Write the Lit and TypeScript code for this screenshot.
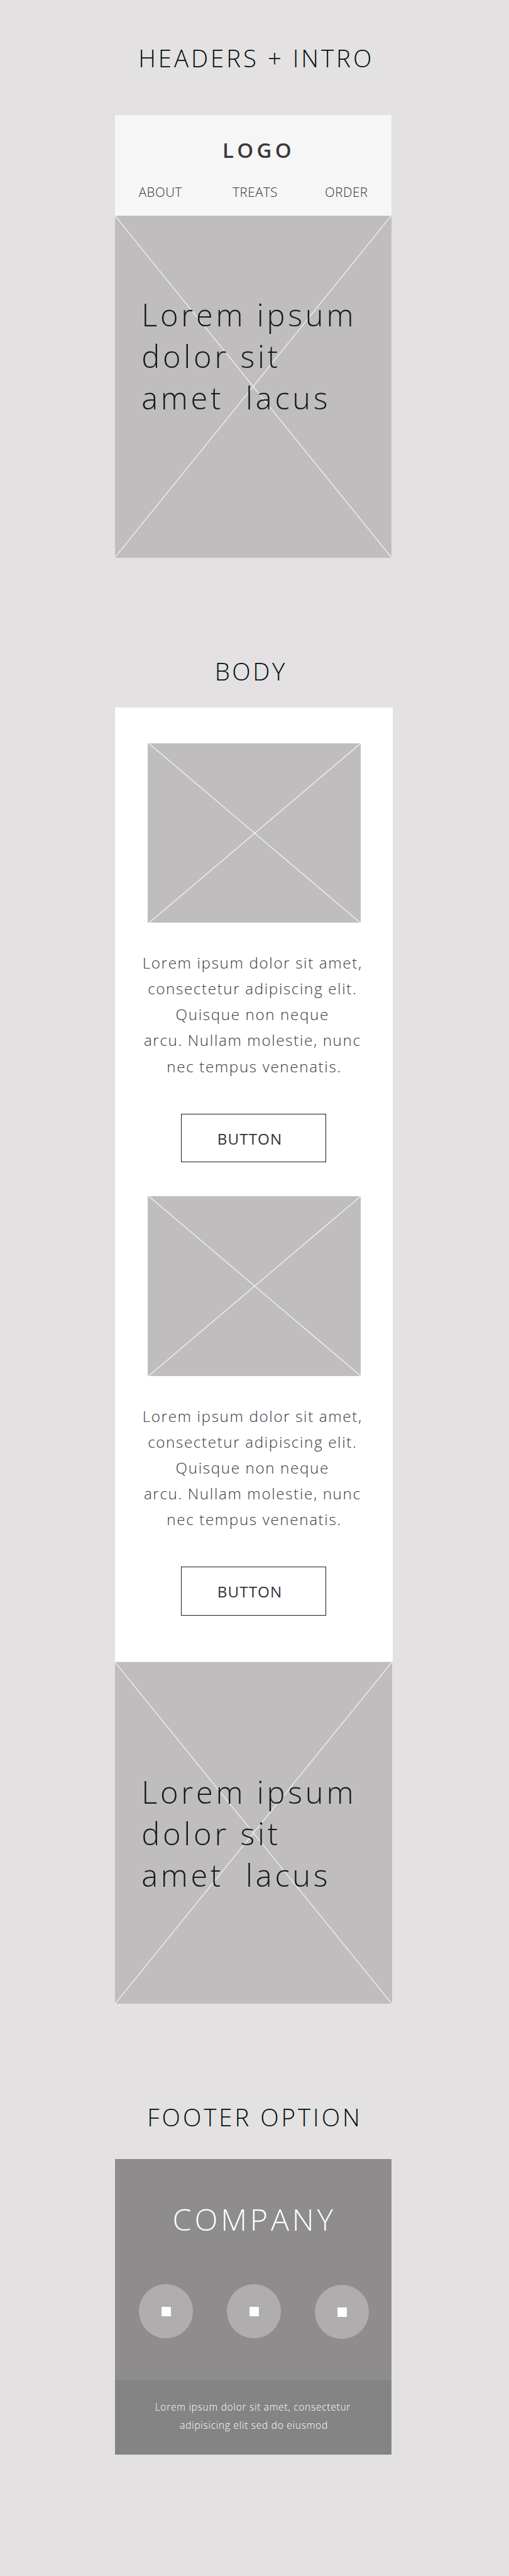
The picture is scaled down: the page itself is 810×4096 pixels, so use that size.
import { LitElement, html, css } from "lit";
import { customElement, property } from "lit/decorators.js";

/* Placeholder picture: a grey box crossed by two diagonals. */
@customElement("image-placeholder")
class ImagePlaceholder extends LitElement {
  @property({ type: Number }) inset = 0;

  static styles = css`
    :host { display: block; background: #bfbdbe; }
    svg { display: block; width: 100%; height: 100%; }
    line { stroke: #f5f4f4; stroke-width: 1.25px; vector-effect: non-scaling-stroke; }
  `;

  render() {
    return html`
      <svg viewBox="0 0 100 100" preserveAspectRatio="none" aria-hidden="true">
        <line x1=${this.inset} y1="0" x2="100" y2="100"></line>
        <line x1="100" y1="0" x2=${this.inset} y2="100"></line>
      </svg>
    `;
  }
}

@customElement("hero-banner")
class HeroBanner extends LitElement {
  static styles = css`
    :host { display: grid; height: calc(593 * var(--u)); }
    image-placeholder, .title { grid-area: 1 / 1; }
    .title {
      margin: 0;
      padding: calc(var(--title-top) * var(--u)) 0 0 calc(45.8 * var(--u));
      font-size: calc(53.3 * var(--u));
      font-weight: 300;
      line-height: calc(72 * var(--u));
      letter-spacing: calc(5.17 * var(--u));
      color: #1a1a1a;
    }
    .line { display: block; white-space: pre; }
  `;

  render() {
    return html`
      <image-placeholder></image-placeholder>
      <h2 class="title">
        ${["Lorem ipsum", "dolor sit", "amet  lacus"].map((t) => html`<span class="line">${t}</span>`)}
      </h2>
    `;
  }
}

@customElement("content-block")
class ContentBlock extends LitElement {
  static styles = css`
    :host { display: block; }
    .picture { width: calc(370 * var(--u)); height: calc(312 * var(--u)); margin-left: calc(56.3 * var(--u)); }
    .copy {
      width: calc(477.2 * var(--u));
      margin: calc(46.2 * var(--u)) 0 calc(59.8 * var(--u));
      font-size: calc(26.5 * var(--u));
      font-weight: 300;
      line-height: calc(45 * var(--u));
      letter-spacing: calc(1.75 * var(--u));
      text-align: center;
      white-space: nowrap;
      color: #3a3a3a;
    }
    .line { display: block; }
    .line:last-child { padding-left: calc(6 * var(--u)); }
    .button {
      display: block;
      box-sizing: border-box;
      width: calc(253 * var(--u));
      height: calc(85 * var(--u));
      margin: 0 0 0 calc(114 * var(--u));
      padding: calc(3 * var(--u)) 0 0 calc(62.5 * var(--u));
      border: 1px solid #1c1c1c;
      background: none;
      font: 400 calc(26.5 * var(--u)) / calc(66 * var(--u)) "Open Sans", sans-serif;
      letter-spacing: calc(1.11 * var(--u));
      text-align: left;
      color: #333;
    }
  `;

  private lines = [
    "Lorem ipsum dolor sit amet,",
    "consectetur adipiscing elit.",
    "Quisque non neque",
    "arcu. Nullam molestie, nunc",
    "nec tempus venenatis.",
  ];

  render() {
    return html`
      <image-placeholder class="picture" .inset=${0.5}></image-placeholder>
      <p class="copy">${this.lines.map((t) => html`<span class="line">${t}</span>`)}</p>
      <button class="button">BUTTON</button>
    `;
  }
}

@customElement("app-root")
class AppRoot extends LitElement {
  static styles = css`
    :host {
      --u: 0.916px;
      display: block;
      box-sizing: border-box;
      min-height: 4096px;
      padding: calc(71.3 * var(--u)) 0 0 calc(200 * var(--u));
      background: #e3e1e2;
      font-family: "Open Sans", sans-serif;
    }
    .heading {
      margin: 0;
      font-size: calc(42 * var(--u));
      font-weight: 300;
      line-height: calc(60 * var(--u));
      letter-spacing: calc(4.29 * var(--u));
      white-space: nowrap;
      color: #001010;
    }
    .heading.intro { padding-left: calc(40.4 * var(--u)); margin-bottom: calc(68.7 * var(--u)); }
    .heading.body {
      padding-left: calc(173 * var(--u));
      margin: calc(167.3 * var(--u)) 0 calc(32.7 * var(--u));
      letter-spacing: calc(3.85 * var(--u));
    }
    .heading.foot {
      padding-left: calc(55.8 * var(--u));
      margin: calc(167.2 * var(--u)) 0 calc(42.8 * var(--u));
    }

    .masthead {
      box-sizing: border-box;
      width: calc(480 * var(--u));
      height: calc(175 * var(--u));
      padding-top: calc(35.3 * var(--u));
      background: #f6f6f6;
    }
    .logo {
      padding-left: calc(186.6 * var(--u));
      font-size: calc(36 * var(--u));
      font-weight: 600;
      line-height: calc(50 * var(--u));
      letter-spacing: calc(5.74 * var(--u));
      color: #3a3a3a;
    }
    .nav {
      display: grid;
      grid-template-columns: calc(163.2 * var(--u)) calc(160.2 * var(--u)) auto;
      margin-top: calc(33.5 * var(--u));
      padding-left: calc(41 * var(--u));
      font-size: calc(22.4 * var(--u));
      font-weight: 300;
      line-height: calc(30 * var(--u));
      letter-spacing: calc(0.62 * var(--u));
      color: #333;
    }
    .hero-top { --title-top: 136.2; width: calc(480 * var(--u)); }
    .hero-bottom { --title-top: 190.6; width: calc(481 * var(--u)); border-top: 1px solid #e0e2e2; }

    .card {
      display: flex;
      flex-direction: column;
      gap: calc(59 * var(--u));
      width: calc(482 * var(--u));
      padding: calc(62 * var(--u)) 0 calc(79 * var(--u));
      background: #fff;
    }

    .footer { width: calc(480 * var(--u)); color: #fff; }
    .brand {
      box-sizing: border-box;
      height: calc(383 * var(--u));
      padding-top: calc(68.4 * var(--u));
      background: #8e8c8d;
    }
    .company {
      padding-left: calc(99.8 * var(--u));
      font-size: calc(53 * var(--u));
      font-weight: 300;
      line-height: calc(72 * var(--u));
      letter-spacing: calc(5.14 * var(--u));
    }
    .social {
      display: flex;
      gap: calc(59 * var(--u));
      margin-top: calc(76.6 * var(--u));
      padding-left: calc(41 * var(--u));
    }
    .dot { display: block; width: calc(94 * var(--u)); height: calc(94 * var(--u)); }
    .dot:last-child { margin-top: 1px; }
    .legal {
      box-sizing: border-box;
      height: calc(130 * var(--u));
      padding-top: calc(31.9 * var(--u));
      background: #848484;
      font-size: calc(17 * var(--u));
      font-weight: 300;
      line-height: calc(32 * var(--u));
      letter-spacing: calc(0.77 * var(--u));
      white-space: nowrap;
    }
    .legal-line { display: block; padding-left: calc(69.3 * var(--u)); }
    .legal-line + .legal-line { padding-left: calc(112.5 * var(--u)); }
  `;

  render() {
    return html`
      <h1 class="heading intro">HEADERS + INTRO</h1>
      <header class="masthead">
        <div class="logo">LOGO</div>
        <nav class="nav">${["ABOUT", "TREATS", "ORDER"].map((t) => html`<span>${t}</span>`)}</nav>
      </header>
      <hero-banner class="hero-top"></hero-banner>

      <h1 class="heading body">BODY</h1>
      <main class="card">
        <content-block></content-block>
        <content-block></content-block>
      </main>
      <hero-banner class="hero-bottom"></hero-banner>

      <h1 class="heading foot">FOOTER OPTION</h1>
      <footer class="footer">
        <div class="brand">
          <div class="company">COMPANY</div>
          <div class="social">
            ${[0, 1, 2].map(
              () => html`<svg class="dot" viewBox="0 0 94 94" aria-hidden="true">
                <circle cx="47" cy="47" r="47" fill="#afadae"></circle>
                <rect x="39" y="39" width="17" height="17" fill="#fff" shape-rendering="crispEdges"></rect>
              </svg>`
            )}
          </div>
        </div>
        <div class="legal">
          <span class="legal-line">Lorem ipsum dolor sit amet, consectetur</span>
          <span class="legal-line">adipisicing elit sed do eiusmod</span>
        </div>
      </footer>
    `;
  }
}
